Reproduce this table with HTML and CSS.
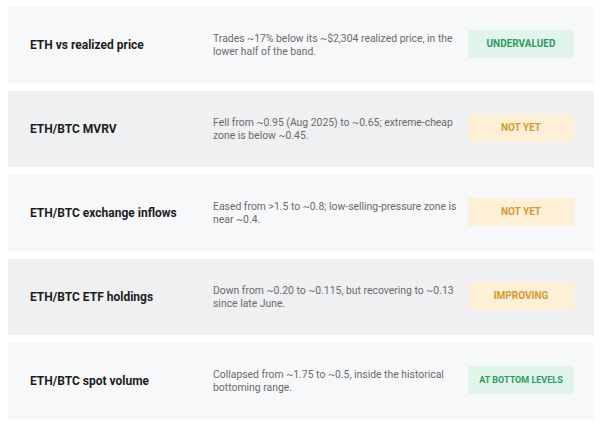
FILE: index.html
```html
<!DOCTYPE html>
<html>
<head>
<meta charset="utf-8">
<link rel="stylesheet" href="styles.css">
</head>
<body>
<div class="list">
  <div class="row light">
    <div class="name">ETH vs realized price</div>
    <div class="desc">Trades ~17% below its ~$2,304 realized price, in the lower half of the band.</div>
    <div class="badge green">UNDERVALUED</div>
  </div>
  <div class="row dark">
    <div class="name">ETH/BTC MVRV</div>
    <div class="desc">Fell from ~0.95 (Aug 2025) to ~0.65; extreme-cheap zone is below ~0.45.</div>
    <div class="badge yellow">NOT YET</div>
  </div>
  <div class="row light">
    <div class="name">ETH/BTC exchange inflows</div>
    <div class="desc">Eased from &gt;1.5 to ~0.8; low-selling-pressure zone is near ~0.4.</div>
    <div class="badge yellow">NOT YET</div>
  </div>
  <div class="row dark">
    <div class="name">ETH/BTC ETF holdings</div>
    <div class="desc">Down from ~0.20 to ~0.115, but recovering to ~0.13 since late June.</div>
    <div class="badge yellow">IMPROVING</div>
  </div>
  <div class="row light">
    <div class="name">ETH/BTC spot volume</div>
    <div class="desc">Collapsed from ~1.75 to ~0.5, inside the historical bottoming range.</div>
    <div class="badge green small">AT BOTTOM LEVELS</div>
  </div>
</div>
</body>
</html>
```

FILE: styles.css
```css
* { box-sizing: border-box; }
html, body { margin: 0; padding: 0; background: #ffffff; }
body { font-family: Roboto, "Liberation Sans", sans-serif; }
.list {
  display: flex;
  flex-direction: column;
  gap: 8px;
  padding: 7px 6px 0 8px;
}
.row {
  height: 76px;
  display: grid;
  grid-template-columns: 183px 255px 106px;
  align-items: center;
  padding-left: 22px;
}
.row.light { background: #f7f8fa; }
.row.dark { background: #eff0f2; }
.name {
  font-size: 12px;
  font-weight: 700;
  color: #1c1c1c;
}
.desc {
  font-size: 10.4px;
  line-height: 13px;
  color: #6a6a6a;
  padding-right: 8px;
}
.badge {
  width: 106px;
  height: 28px;
  border-radius: 3px;
  display: flex;
  align-items: center;
  justify-content: center;
  font-size: 10px;
  font-weight: 700;
  margin-top: -3px;
}
.badge.green { background: #e2f5eb; color: #2e9a63; }
.badge.yellow { background: #fdf0d6; color: #d39a2c; }
.badge.small { font-size: 9px; }
```
